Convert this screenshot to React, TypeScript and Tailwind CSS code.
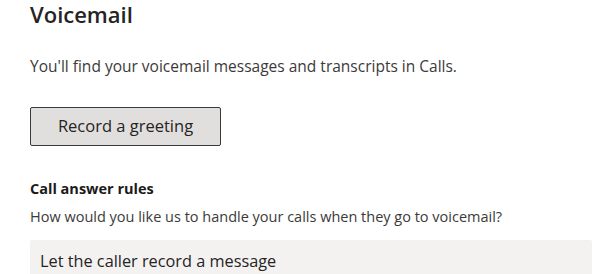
export default function App() {
  return (
    <div className="min-h-screen bg-white pl-[30px] font-['Open_Sans',sans-serif] text-[#252423] overflow-hidden">
      <h1 className="text-[22px] leading-[30px] font-semibold -mt-[1px]">Voicemail</h1>
      <p className="mt-[26px] text-[15.5px] leading-[22px] text-[#3b3a39]">
        You'll find your voicemail messages and transcripts in Calls.
      </p>
      <button className="mt-[30px] flex h-[39px] w-[191px] items-center justify-center rounded-[2px] border border-[#3b3a39] bg-[#e1dfdd] text-[16.5px] text-[#252423]">
        Record a greeting
      </button>
      <h2 className="mt-[32px] text-[14.5px] leading-[22px] font-bold text-[#1b1a19]">Call answer rules</h2>
      <p className="mt-[7px] text-[14.5px] leading-[20px] text-[#3b3a39]">
        How would you like us to handle your calls when they go to voicemail?
      </p>
      <div className="mt-[13px] h-[40px] rounded-[2px] bg-[#f3f2f1] pl-[10px] pt-[10px] text-[16.3px] leading-[22px] text-[#252423]">
        Let the caller record a message
      </div>
    </div>
  );
}
